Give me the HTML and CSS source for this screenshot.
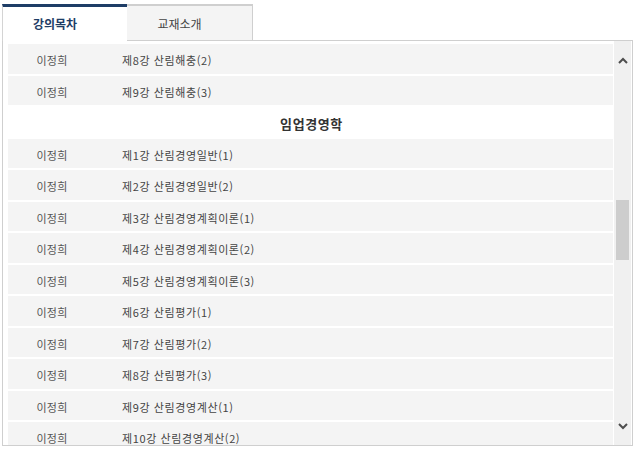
FILE: index.html
```html
<!DOCTYPE html>
<html lang="ko">

<head>
  <meta charset="UTF-8" />
  <meta name="viewport" content="width=device-width, initial-scale=1.0" />
  <title>강의목차</title>
  <link rel="stylesheet" href="styles.css">
</head>

<body>
  <div class="tabs">
    <div class="tab active">강의목차</div>
    <div class="tab">교재소개</div>
    <div class="tab-rest"></div>
  </div>

  <div class="panel">
    <div class="list">
      <div class="row"><span class="name">이정희</span><span class="title">제8강 산림해충(2)</span></div>
      <div class="row"><span class="name">이정희</span><span class="title">제9강 산림해충(3)</span></div>
      <div class="subject">임업경영학</div>
      <div class="row"><span class="name">이정희</span><span class="title">제1강 산림경영일반(1)</span></div>
      <div class="row"><span class="name">이정희</span><span class="title">제2강 산림경영일반(2)</span></div>
      <div class="row"><span class="name">이정희</span><span class="title">제3강 산림경영계획이론(1)</span></div>
      <div class="row"><span class="name">이정희</span><span class="title">제4강 산림경영계획이론(2)</span></div>
      <div class="row"><span class="name">이정희</span><span class="title">제5강 산림경영계획이론(3)</span></div>
      <div class="row"><span class="name">이정희</span><span class="title">제6강 산림평가(1)</span></div>
      <div class="row"><span class="name">이정희</span><span class="title">제7강 산림평가(2)</span></div>
      <div class="row"><span class="name">이정희</span><span class="title">제8강 산림평가(3)</span></div>
      <div class="row"><span class="name">이정희</span><span class="title">제9강 산림경영계산(1)</span></div>
      <div class="row"><span class="name">이정희</span><span class="title">제10강 산림경영계산(2)</span></div>
    </div>

    <div class="scrollbar">
      <div class="arrow">
        <svg width="10" height="7" viewBox="0 0 10 7"><path d="M1 6 L5 2 L9 6" fill="none" stroke="#4d4d4d" stroke-width="2" /></svg>
      </div>
      <div class="track">
        <div class="thumb"></div>
      </div>
      <div class="arrow">
        <svg width="10" height="7" viewBox="0 0 10 7"><path d="M1 1 L5 5 L9 1" fill="none" stroke="#4d4d4d" stroke-width="2" /></svg>
      </div>
    </div>
  </div>
</body>

</html>
```

FILE: styles.css
```css
body {
  margin: 0;
  padding: 4px 2px 0 2px;
  background-color: #fff;
  font-family: "Noto Sans CJK KR", "Noto Sans", sans-serif;
  font-size: 11px;
  color: #444;
}

.tabs {
  display: flex;
  height: 37px;
}

.tab {
  width: 125px;
  display: flex;
  align-items: center;
  justify-content: center;
  font-size: 12px;
  color: #444;
  box-sizing: border-box;
  padding-right: 20px;
}

.tab.active {
  border-top: 3px solid #1e3d66;
  border-left: 1px solid #d4d4d4;
  background-color: #fff;
  color: #1e3d66;
  font-weight: bold;
  padding-bottom: 2px;
}

.tab:not(.active) {
  width: 126px;
  background-color: #f4f4f4;
  border-top: 2px solid #cfcfcf;
  border-right: 1px solid #cfcfcf;
  border-bottom: 1px solid #cfcfcf;
  padding-top: 1px;
}

.tab-rest {
  flex: 1;
  border-bottom: 1px solid #cfcfcf;
}

.panel {
  display: flex;
  height: 405px;
  border: 1px solid #cfcfcf;
  border-top: none;
  box-sizing: border-box;
  overflow: hidden;
}

.list {
  flex: 1;
  padding: 3px 1px 0 5px;
}

.row,
.subject {
  height: 29.5px;
  margin-bottom: 2px;
  padding-top: 3px;
  box-sizing: border-box;
  display: flex;
  align-items: center;
}

.row {
  background-color: #f4f4f4;
}

.name {
  width: 88px;
  text-align: center;
  color: #555;
  letter-spacing: 0.2px;
}

.title {
  padding-left: 26px;
  color: #444;
  letter-spacing: 0.6px;
}

.subject {
  justify-content: center;
  font-size: 13px;
  font-weight: bold;
  color: #333;
  letter-spacing: 0.6px;
  padding-left: 2px;
}

.scrollbar {
  width: 17px;
  margin-right: 1px;
  background-color: #f0f0f0;
  display: flex;
  flex-direction: column;
}

.arrow {
  height: 17px;
  display: flex;
  align-items: center;
  justify-content: center;
}

.scrollbar .arrow:first-child {
  margin-top: 11px;
}

.scrollbar .arrow:last-child {
  margin-bottom: 10px;
}

.track {
  flex: 1;
  padding-top: 131px;
}

.thumb {
  width: 13px;
  height: 60px;
  margin-left: 2px;
  background-color: #cdcdcd;
}
```
